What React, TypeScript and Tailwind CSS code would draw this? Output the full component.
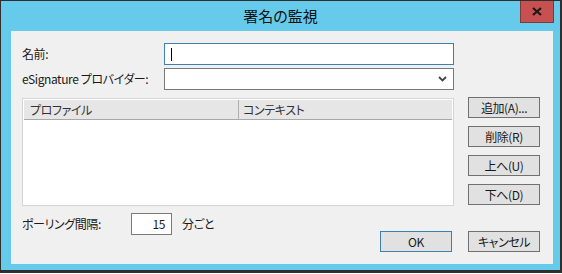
import React from "react";

function Btn({ children, primary }: { children: React.ReactNode; primary?: boolean }) {
  return (
    <div
      className={`shrink-0 w-[72px] h-[21px] flex items-center justify-center bg-[#e1e1e1] border text-[12px] leading-none text-[#1a1a1a] ${
        primary ? "border-[#3c7fb1]" : "border-[#707070]"
      }`}
    >
      {children}
    </div>
  );
}

export default function App() {
  return (
    <div className="w-[562px] h-[273px] bg-[#66cbea] border-l border-t border-r-2 border-b-[3px] border-[#2f2f2f] flex flex-col font-['Noto_Sans_CJK_JP','Noto_Sans',sans-serif] [font-feature-settings:'palt']">
      <div className="h-[30px] flex items-start relative shrink-0">
        <div className="flex-1 text-center text-[15px] leading-none pt-[7px] text-[#111]">署名の監視</div>
        <div className="absolute right-[6px] top-0 w-[34px] h-[22px] bg-[#c75050] border border-t-0 border-[#7e3a3a] flex items-center justify-center">
          <svg width="10" height="9" viewBox="0 0 10 9">
            <path d="M1 1 L9 8 M9 1 L1 8" stroke="#1a1a1a" strokeWidth="2.2" />
          </svg>
        </div>
      </div>
      <div className="flex-1 flex pl-[10px] pr-[7px] pb-[6px]">
        <div className="flex-1 bg-[#f0f0f0] pl-[11px] pt-[12px] flex flex-col text-[12px] text-[#1a1a1a] tracking-[-0.4px]">
          <div className="flex items-center h-[22px]">
            <div className="w-[142px] shrink-0">名前:</div>
            <div className="shrink-0 w-[290px] h-[22px] bg-white border border-[#3c7fb1] flex items-center pl-[6px]">
              <div className="w-px h-[13px] bg-black" />
            </div>
          </div>
          <div className="flex items-center h-[22px] mt-[3px]">
            <div className="w-[142px] shrink-0 whitespace-nowrap">eSignature プロバイダー:</div>
            <div className="shrink-0 w-[290px] h-[22px] bg-white border border-[#7a7a7a] flex items-center justify-end pr-[6px]">
              <svg width="9" height="6" viewBox="0 0 9 6">
                <path d="M1 1 L4.5 4.5 L8 1" stroke="#444" strokeWidth="1.8" fill="none" />
              </svg>
            </div>
          </div>
          <div className="flex mt-[7px] items-start">
            <div className="shrink-0 w-[432px] h-[108px] mt-[1px] border border-[#d5d5d5] bg-white p-px flex flex-col">
              <div className="h-[20px] flex bg-[#e6e6e6] border-b border-[#a8a8a8] text-[#333]">
                <div className="w-[215px] pl-[6px] flex items-center border-r border-[#b0b0b0]">プロファイル</div>
                <div className="flex-1 pl-[4px] flex items-center">コンテキスト</div>
              </div>
            </div>
            <div className="shrink-0 ml-[14px] flex flex-col gap-[8px]">
              <Btn>追加(A)...</Btn>
              <Btn>削除(R)</Btn>
              <Btn>上へ(U)</Btn>
              <Btn>下へ(D)</Btn>
            </div>
          </div>
          <div className="flex items-start mt-[7px]">
            <div className="shrink-0 w-[109px] h-[22px] flex items-center whitespace-nowrap">ポーリング間隔:</div>
            <div className="shrink-0 w-[41px] h-[22px] bg-white border border-[#7a7a7a] flex items-center justify-end pr-[6px]">15</div>
            <div className="shrink-0 w-[50px] pl-[10px] h-[22px] flex items-center whitespace-nowrap">分ごと</div>
            <div className="shrink-0 ml-[158px] mt-[18px] flex gap-[16px]">
              <Btn primary>OK</Btn>
              <Btn>キャンセル</Btn>
            </div>
          </div>
        </div>
      </div>
    </div>
  );
}
